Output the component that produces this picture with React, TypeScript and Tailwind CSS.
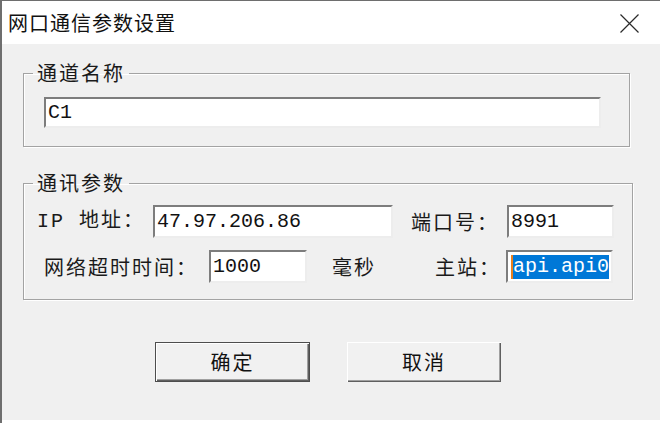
const cjk = { fontFamily: '"Noto Sans CJK SC", "Noto Sans", sans-serif' };
const mono = { fontFamily: '"Liberation Mono", "Noto Sans CJK SC", monospace' };

function Field({ value, className }: { value: string; className: string }) {
    return (
        <div
            className={`flex items-center bg-white border-2 border-t-[#7d7d7d] border-l-[#7d7d7d] border-b-[#ededed] border-r-[#ededed] pl-[2px] text-[20px] text-[#111] ${className}`}
            style={mono}
        >
            {value}
        </div>
    );
}

function Group({ title, className, children }: { title: string; className: string; children: React.ReactNode }) {
    return (
        <fieldset className={`border border-[#a3a3a3] shadow-[inset_1px_1px_0_#ffffff,1px_1px_0_#ffffff] ${className}`}>
            <legend className="ml-[9px] px-[4px] text-[20px] leading-[26px] tracking-[2px] text-[#1a1a1a]" style={cjk}>
                {title}
            </legend>
            {children}
        </fieldset>
    );
}

export default function App() {
    return (
        <div className="w-[660px] h-[423px] bg-white flex flex-col border-l-2 border-t border-[#6e6e6e] overflow-hidden select-none">
            {/* title bar */}
            <div className="h-[43px] shrink-0 flex items-center justify-between pl-[6px] pr-[21px]">
                <span className="text-[20px] tracking-[1px] text-[#111] pt-[1px]" style={cjk}>
                    网口通信参数设置
                </span>
                <svg width="19" height="19" viewBox="0 0 19 19" className="mt-[1px]">
                    <path d="M0.5 0.5 L18.5 18.5 M18.5 0.5 L0.5 18.5" stroke="#2b2b2b" strokeWidth="1.2" fill="none" />
                </svg>
            </div>

            {/* body */}
            <div className="h-[376px] shrink-0 bg-[#f0f0f0] pl-[21px] flex flex-col">
                <Group title="通道名称" className="mt-[16px] w-[607px] pb-[18px]">
                    <Field value="C1" className="ml-[20px] mt-[11px] w-[557px] h-[31px]" />
                </Group>

                <Group title="通讯参数" className="mt-[23px] w-[610px] pb-[16px]">
                    <div className="flex items-center mt-[9px] text-[20px] text-[#1a1a1a] tracking-[2px]">
                        <span className="ml-[13px] w-[116px]" style={mono}>
                            IP 地址：
                        </span>
                        <Field value="47.97.206.86" className="w-[240px] h-[33px] tracking-normal" />
                        <span className="ml-[18px] w-[96px]" style={cjk}>
                            端口号：
                        </span>
                        <Field value="8991" className="w-[107px] h-[33px] tracking-normal" />
                    </div>
                    <div className="flex items-center mt-[12px] text-[20px] text-[#1a1a1a] tracking-[2px]">
                        <span className="ml-[20px] w-[165px]" style={cjk}>
                            网络超时时间：
                        </span>
                        <Field value="1000" className="w-[98px] h-[33px] tracking-normal" />
                        <span className="ml-[25px] w-[103px]" style={cjk}>
                            毫秒
                        </span>
                        <span className="w-[71px]" style={cjk}>
                            主站：
                        </span>
                        <div
                            className="flex items-center w-[107px] h-[33px] bg-white border-2 border-t-[#7d7d7d] border-l-[#7d7d7d] border-b-[#ededed] border-r-[#ededed] pl-[3px] tracking-normal"
                            style={mono}
                        >
                            <span className="w-[2px] h-[24px] bg-[#e8801e]" />
                            <span className="bg-[#0078d7] text-white leading-[24px]">api.api0</span>
                        </div>
                    </div>
                </Group>

                <div className="flex mt-[42px] ml-[132px] gap-[37px]">
                    <button
                        className="w-[155px] h-[40px] bg-[#f1f1f1] border border-[#4d4d4d] shadow-[inset_1px_1px_0_#ffffff,inset_-1px_-1px_0_#5f5f5f,inset_-2px_-2px_0_#a0a0a0] text-[20px] tracking-[2px] text-[#111]"
                        style={cjk}
                    >
                        确定
                    </button>
                    <button
                        className="w-[154px] h-[40px] bg-[#f1f1f1] shadow-[inset_1px_1px_0_#ffffff,inset_-1px_-1px_0_#5f5f5f,inset_-2px_-2px_0_#a0a0a0] text-[20px] tracking-[2px] text-[#111]"
                        style={cjk}
                    >
                        取消
                    </button>
                </div>
            </div>
        </div>
    );
}
